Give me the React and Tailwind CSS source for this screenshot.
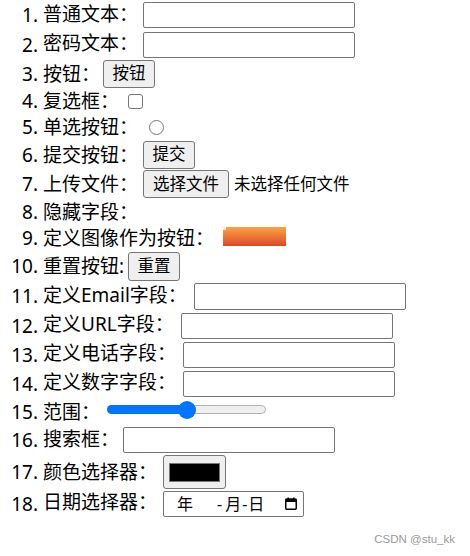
import React from "react";

const FONT = { fontFamily: "'Noto Sans', 'Noto Sans CJK SC', sans-serif" };

function Row({ n, h, label, lw, labelCls = "", children }) {
  return (
    <div className={`flex items-center ${h}`}>
      <span className="w-[38px] text-right leading-[26px] shrink-0">{n}.</span>
      <span className={`ml-[5px] leading-[26px] whitespace-nowrap shrink-0 ${lw} ${labelCls}`}>{label}</span>
      {children}
    </div>
  );
}

function TextInput({ h = "h-[26px]" }) {
  return <div className={`w-[212px] ${h} border border-[#767676] rounded-[2px] bg-white shrink-0`} />;
}

function Btn({ w = "w-[52px]", h = "h-[28px]", children }) {
  return (
    <div className={`${w} ${h} shrink-0 flex items-center justify-center bg-[#efefef] border border-[#767676] rounded-[3px] text-[16.5px] leading-none`}>
      {children}
    </div>
  );
}

export default function App() {
  return (
    <div className="w-[470px] h-[556px] bg-white text-black text-[19px] overflow-hidden" style={FONT}>
      <Row n={1} h="h-[30px]" label="普通文本：" lw="w-[100px]" labelCls="pb-[3px]"><TextInput /></Row>
      <Row n={2} h="h-[29px]" label="密码文本：" lw="w-[100px]" labelCls="pb-[3px]"><TextInput /></Row>
      <Row n={3} h="h-[29px]" label="按钮：" lw="w-[60px]"><Btn>按钮</Btn></Row>
      <Row n={4} h="h-[26px]" label="复选框：" lw="w-[85px]">
        <div className="w-[15px] h-[15px] border border-[#767676] rounded-[3px] bg-white shrink-0" />
      </Row>
      <Row n={5} h="h-[26px]" label="单选按钮：" lw="w-[106px]">
        <div className="w-[15px] h-[15px] border border-[#767676] rounded-full bg-white shrink-0" />
      </Row>
      <Row n={6} h="h-[29px]" label="提交按钮：" lw="w-[100px]"><Btn>提交</Btn></Row>
      <Row n={7} h="h-[30px]" label="上传文件：" lw="w-[100px]">
        <Btn w="w-[86px]">选择文件</Btn>
        <span className="ml-[5px] text-[16.5px] whitespace-nowrap">未选择任何文件</span>
      </Row>
      <Row n={8} h="h-[26px]" label="隐藏字段：" lw="w-[100px]" />
      <Row n={9} h="h-[26px]" label="定义图像作为按钮：" lw="w-[180px]">
        <div className="relative w-[63px] h-[19px] mb-[3px] shrink-0 bg-gradient-to-b from-[#f9a343] to-[#dc4529]">
          <div className="absolute left-0 top-0 w-[3px] h-[3px] bg-white/80" />
        </div>
      </Row>
      <Row n={10} h="h-[30px]" label="重置按钮:" lw="w-[85px]"><Btn h="h-[29px]">重置</Btn></Row>
      <Row n={11} h="h-[30px]" label="定义Email字段：" lw="w-[151px]" labelCls="pb-[3px]"><TextInput h="h-[27px]" /></Row>
      <Row n={12} h="h-[29px]" label="定义URL字段：" lw="w-[138px]" labelCls="pb-[3px]"><TextInput /></Row>
      <Row n={13} h="h-[29px]" label="定义电话字段：" lw="w-[140px]" labelCls="pb-[3px]"><TextInput /></Row>
      <Row n={14} h="h-[29px]" label="定义数字字段：" lw="w-[140px]" labelCls="pb-[3px]"><TextInput /></Row>
      <Row n={15} h="h-[27px]" label="范围：" lw="w-[64px]">
        <div className="relative w-[159px] h-[9px] mb-[4px] shrink-0 rounded-full bg-[#efefef] border border-[#b2b2b2]">
          <div className="absolute -left-px -top-px h-[9px] w-[82px] rounded-full bg-[#0075ff]" />
          <div className="absolute left-[70px] top-[-5px] w-[18px] h-[18px] rounded-full bg-[#0075ff]" />
        </div>
      </Row>
      <Row n={16} h="h-[30px]" label="搜索框：" lw="w-[80px]" labelCls="pb-[3px]"><TextInput /></Row>
      <Row n={17} h="h-[34px]" label="颜色选择器：" lw="w-[120px]">
        <div className="w-[63px] h-[34px] shrink-0 flex items-center justify-center bg-[#efefef] border border-[#767676] rounded-[3px]">
          <div className="w-[51px] h-[19px] bg-black border border-[#777777]" />
        </div>
      </Row>
      <Row n={18} h="h-[29px]" label="日期选择器：" lw="w-[120px]" labelCls="pb-[3px]">
        <div className="w-[141px] h-[26px] shrink-0 flex items-center border border-[#767676] rounded-[2px] bg-white text-[16px] leading-none">
          <span className="ml-[13px]">年</span>
          <span className="ml-[24px]">-</span>
          <span className="ml-[3px]">月</span>
          <span className="ml-[1px]">-</span>
          <span className="ml-[1px]">日</span>
          <svg className="ml-auto mr-[6px]" width="12" height="13" viewBox="0 0 12 13">
            <rect x="0.75" y="2" width="10.5" height="10.25" rx="1" fill="none" stroke="black" strokeWidth="1.5" />
            <rect x="0.75" y="2" width="10.5" height="3" fill="black" />
            <rect x="2.5" y="0.5" width="1.5" height="2" fill="black" />
            <rect x="8" y="0.5" width="1.5" height="2" fill="black" />
          </svg>
        </div>
      </Row>
      <div className="mt-[13px] flex justify-end pr-[15px]">
        <span className="text-[11.5px] leading-[16px] text-[#9a9a9a]" style={{ fontFamily: "'Liberation Sans', Arial, sans-serif" }}>
          CSDN @stu_kk
        </span>
      </div>
    </div>
  );
}
